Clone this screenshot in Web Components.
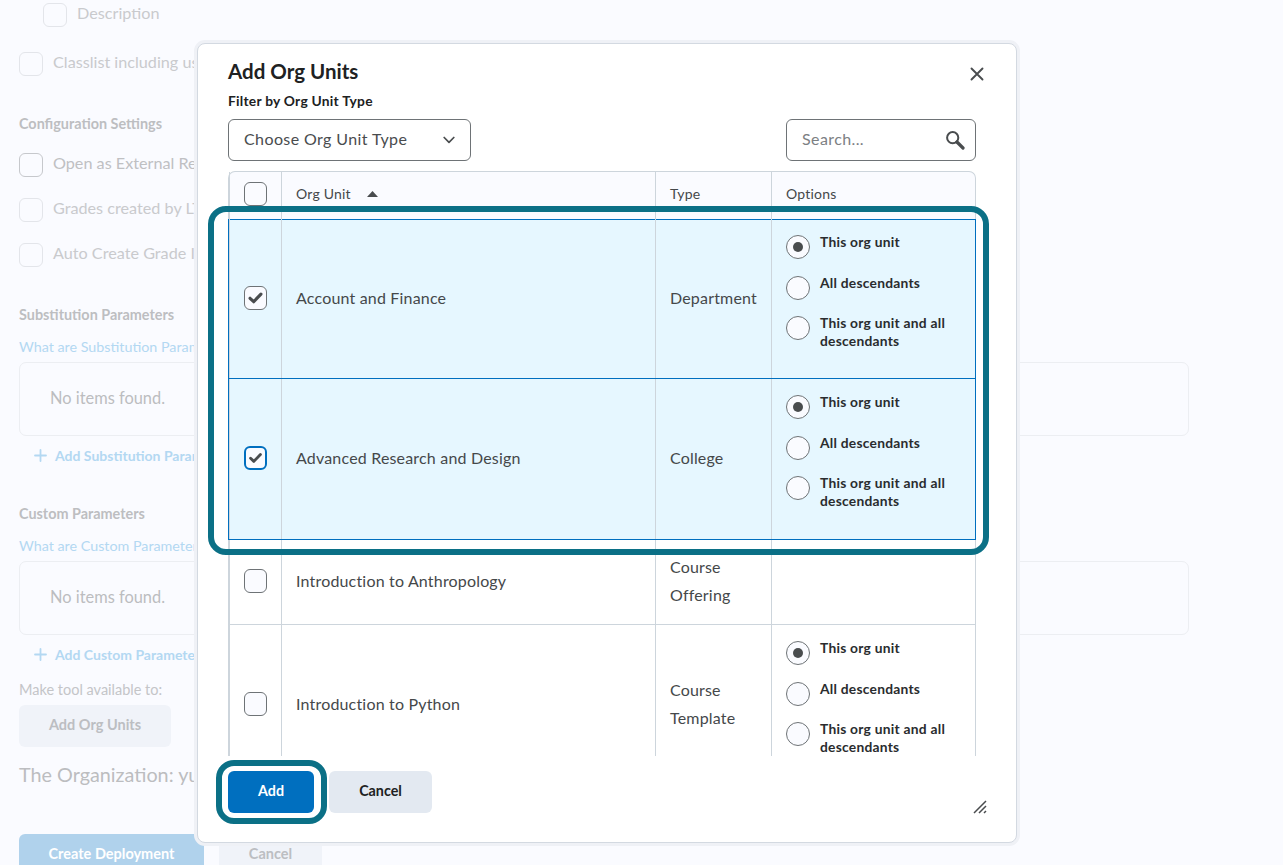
<!DOCTYPE html>
<html lang="en">
<head>
<meta charset="utf-8">
<title>Add Org Units</title>
<style>
   html, body { margin: 0; height: 100%; }
   body { font-family: Lato, "Noto Sans", sans-serif; background: #fafbff; overflow: hidden; }
</style>
</head>
<body>
<bg-page>
   <bg-check style="margin: 3px 0 0 24px">Description</bg-check>
   <bg-check style="margin-top: 25px">Classlist including users</bg-check>
   <bg-heading style="margin-top: 39px">Configuration Settings</bg-heading>
   <bg-check dark style="margin-top: 20px">Open as External Resource</bg-check>
   <bg-check style="margin-top: 21px">Grades created by LTI</bg-check>
   <bg-check style="margin-top: 21px">Auto Create Grade Items</bg-check>
   <bg-heading style="margin-top: 39px">Substitution Parameters</bg-heading>
   <bg-param-list link="What are Substitution Parameters?" add="Add Substitution Parameter"></bg-param-list>
   <bg-heading style="margin-top: 40px">Custom Parameters</bg-heading>
   <bg-param-list link="What are Custom Parameters?" add="Add Custom Parameter"></bg-param-list>
   <div style="margin-top: 16px; font-size: 14.5px; line-height: 20px; color: #c4c5c8">Make tool available to:</div>
   <bg-button style="margin-top: 5px; width: 152px">Add Org Units</bg-button>
   <div style="margin-top: 15px; font-size: 19.8px; line-height: 24px; color: #bcbdc0">The Organization: yu-lti-test</div>
   <div style="display: flex; gap: 15px; margin-top: 48px">
      <bg-button primary style="width: 185px">Create Deployment</bg-button>
      <bg-button style="width: 103px">Cancel</bg-button>
   </div>
</bg-page>

<org-dialog>
   <org-row slot="rows" header>
      <org-check slot="check"></org-check>
      <span slot="name">Org Unit <sort-caret></sort-caret></span>
      <span slot="type">Type</span>
      <span slot="options">Options</span>
   </org-row>
   <org-row slot="rows" selected first style="height: 160px">
      <org-check slot="check" checked></org-check>
      <span slot="name">Account and Finance</span>
      <span slot="type">Department</span>
      <org-options slot="options"></org-options>
   </org-row>
   <org-row slot="rows" selected style="height: 161px">
      <org-check slot="check" checked focused></org-check>
      <span slot="name">Advanced Research and Design</span>
      <span slot="type">College</span>
      <org-options slot="options"></org-options>
   </org-row>
   <org-row slot="rows" style="height: 85px">
      <org-check slot="check"></org-check>
      <span slot="name">Introduction to Anthropology</span>
      <span slot="type">Course Offering</span>
   </org-row>
   <org-row slot="rows" style="height: 160px">
      <org-check slot="check"></org-check>
      <span slot="name">Introduction to Python</span>
      <span slot="type">Course Template</span>
      <org-options slot="options"></org-options>
   </org-row>
</org-dialog>

<note-ring style="left: 208px; top: 206px; width: 781px; height: 349px"></note-ring>
<note-ring style="left: 216px; top: 760px; width: 111px; height: 64px"></note-ring>

<script>
"use strict";
/* [ helper ]
=================================== */
const define = ( tag, html, setup ) => {
   customElements.define( tag, class extends HTMLElement {
      constructor() {
         super();
         const t = document.createElement( "template" );
         t.innerHTML = html;
         this.attachShadow( { mode: "open" } ).append( t.content.cloneNode( true ) );
      }
      connectedCallback() {
         if( setup ) setup( this, this.shadowRoot );
      }
   } );
};

/* [ page behind the dialog ]
=================================== */
define( "bg-page", `
   <style>
      :host { display: block; height: 865px; overflow: hidden; padding-left: 19px; box-sizing: border-box; }
   </style>
   <slot></slot>
` );

define( "bg-check", `
   <style>
      :host { display: flex; align-items: center; gap: 10px; height: 24px; color: #c9cacd; font-size: 16.2px; white-space: nowrap; }
      :host([dark]) { color: #bfc0c3; }
      box { box-sizing: border-box; width: 24px; height: 24px; border: 1px solid #e3e5ea; border-radius: 6px; background: #fafbff; flex: none; }
      :host([dark]) box { border-color: #c6c8cc; }
      span { padding-bottom: 5px; }
   </style>
   <box></box><span><slot></slot></span>
` );

define( "bg-heading", `
   <style>
      :host { display: block; color: #bdbec1; font-size: 14.4px; font-weight: 700; line-height: 18px; white-space: nowrap; }
   </style>
   <slot></slot>
` );

define( "bg-param-list", `
   <style>
      :host { display: block; width: 1170px; }
      a { display: block; margin-top: 14px; color: #b3d8f2; font-size: 14.3px; line-height: 18px; white-space: nowrap; }
      list { display: flex; align-items: center; box-sizing: border-box; height: 74px; margin-top: 6px; padding: 0 0 3px 30px; border: 1px solid #eceef2; border-radius: 7px; color: #bcbdc0; font-size: 16.4px; }
      add { display: flex; align-items: center; gap: 8px; height: 20px; margin: 9px 0 0 15px; color: #b3d8f2; font-size: 14px; font-weight: 700; white-space: nowrap; }
      svg { width: 13px; height: 13px; }
   </style>
   <a id="link"></a>
   <list>No items found.</list>
   <add>
      <svg viewBox="0 0 13 13"><path d="M6.5 1v11M1 6.5h11" stroke="#b3d8f2" stroke-width="1.8" stroke-linecap="round"/></svg>
      <span id="add"></span>
   </add>
`, ( el, root ) => {
   root.getElementById( "link" ).textContent = el.getAttribute( "link" );
   root.getElementById( "add" ).textContent = el.getAttribute( "add" );
} );

define( "bg-button", `
   <style>
      :host { display: flex; align-items: center; justify-content: center; box-sizing: border-box; height: 42px; padding-bottom: 3px; border-radius: 6px; background: #f0f3f9; color: #bcbec2; font-size: 14.5px; font-weight: 700; white-space: nowrap; }
      :host([primary]) { background: #b0d2ec; color: #fff; }
   </style>
   <slot></slot>
` );

/* [ dialog ]
=================================== */
define( "org-dialog", `
   <style>
      :host { position: absolute; left: 197px; top: 43px; width: 820px; height: 800px; box-sizing: border-box; display: flex; flex-direction: column; padding: 0 40px 0 30px; background: #fff; border: 1px solid #d3d9e1; border-radius: 8px; box-shadow: 0 0 0 3px #eff1f6; color: #202122; }
      h1 { margin: 14px 0 0; font-size: 20.5px; font-weight: 700; line-height: 26px; }
      label { display: block; margin-top: 8px; font-size: 13.8px; letter-spacing: .25px; font-weight: 700; line-height: 18px; }
      filter-row { display: flex; justify-content: space-between; margin-top: 9px; }
      field { display: flex; align-items: center; justify-content: space-between; box-sizing: border-box; height: 42px; padding: 0 10px 0 15px; border: 1px solid #6e7376; border-radius: 6px; font-size: 16px; letter-spacing: .4px; }
      field span { padding-bottom: 3px; }
      #select { width: 243px; color: #494c4e; padding-right: 15px; }
      #search { width: 190px; color: #7c8083; }
      close-x { position: absolute; right: 32px; top: 23px; display: flex; }
      rows { display: block; height: 585px; margin-top: 10px; overflow: hidden; }
      footer { display: flex; gap: 15px; margin-top: 15px; }
      button { box-sizing: border-box; height: 42px; border: 0; border-radius: 6px; font: 700 14.3px Lato, sans-serif; padding: 0 0 3px; }
      #add { width: 86px; background: #006fbf; color: #fff; }
      #cancel { width: 103px; background: #e3e9f1; color: #202122; }
      grip { position: absolute; right: 29px; bottom: 28px; display: flex; }
   </style>
   <h1>Add Org Units</h1>
   <label>Filter by Org Unit Type</label>
   <filter-row>
      <field id="select">
         <span>Choose Org Unit Type</span>
         <svg width="12" height="8" viewBox="0 0 12 8"><path d="M1.2 1.5 6 6.3l4.8-4.8" fill="none" stroke="#494c4e" stroke-width="1.7" stroke-linecap="round" stroke-linejoin="round"/></svg>
      </field>
      <field id="search">
         <span>Search...</span>
         <svg width="20" height="20" viewBox="0 0 20 20"><circle cx="7.7" cy="7.7" r="5.6" fill="none" stroke="#494c4e" stroke-width="2"/><path d="m12 12 6 6" stroke="#494c4e" stroke-width="3.2" stroke-linecap="round"/></svg>
      </field>
   </filter-row>
   <close-x>
      <svg width="14" height="14" viewBox="0 0 14 14"><path d="M1.5 1.5l11 11M12.5 1.5l-11 11" stroke="#494c4e" stroke-width="1.9" stroke-linecap="round"/></svg>
   </close-x>
   <rows><slot name="rows"></slot></rows>
   <footer>
      <button id="add">Add</button>
      <button id="cancel">Cancel</button>
   </footer>
   <grip>
      <svg width="14" height="14" viewBox="0 0 14 14"><path d="M1 13 13 1M6 13l7-7M11 13l2-2" stroke="#494c4e" stroke-width="1.5"/></svg>
   </grip>
` );

define( "org-row", `
   <style>
      :host { display: grid; grid-template-columns: 52px 374px 116px 204px; box-sizing: border-box; width: 748px; border: solid #cdd5dc; border-width: 0 1px 1px 1px; color: #45484a; font-size: 16px; letter-spacing: .18px; }
      :host([header]) { height: 48px; background: #fafbff; border-width: 1px 1px 0 1px; border-radius: 7px 7px 0 0; font-size: 14px; letter-spacing: .2px; }
      :host([selected]) { background: #e6f7ff; border-color: #006fbf; }
      :host([first]) { box-shadow: inset 0 1px #006fbf; }
      cell { display: flex; align-items: center; box-sizing: border-box; padding: 0 14px 2px; border-left: 1px solid #cdd5dc; line-height: 28px; min-width: 0; }
      cell:first-child { border-left: 0; padding: 1px 0 0; justify-content: center; }
      :host([header]) cell { padding-bottom: 3px; }
      :host([header]) cell:first-child { padding: 0; }
      #options { padding: 0 14px; align-items: flex-start; }
      :host([header]) #options { align-items: center; padding-bottom: 3px; }
   </style>
   <cell><slot name="check"></slot></cell>
   <cell><slot name="name"></slot></cell>
   <cell><slot name="type"></slot></cell>
   <cell id="options"><slot name="options"></slot></cell>
` );

define( "sort-caret", `
   <style>
      :host { display: inline-block; margin-left: 12px; vertical-align: 2px; }
      svg { display: block; }
   </style>
   <svg width="11" height="6" viewBox="0 0 11 6"><path d="M5.5 0 11 6H0z" fill="#494c4e"/></svg>
` );

define( "org-check", `
   <style>
      :host { display: block; width: 24px; height: 24px; box-sizing: border-box; border: 1px solid #6e7376; border-radius: 6px; background: #fafbff; }
      :host([focused]) { border: 2px solid #006fbf; }
      svg { display: none; width: 100%; height: 100%; }
      :host([checked]) svg { display: block; }
   </style>
   <svg viewBox="0 0 22 22"><path d="M5.3 11.3l3.8 3.6 7.6-8" fill="none" stroke="#494c4e" stroke-width="3.3" stroke-linecap="round" stroke-linejoin="round"/></svg>
` );

define( "org-radio", `
   <style>
      :host { display: flex; gap: 10px; color: #2a2c2e; font-size: 13.8px; letter-spacing: .25px; font-weight: 700; line-height: 18px; }
      dot { flex: none; display: flex; align-items: center; justify-content: center; box-sizing: border-box; width: 24px; height: 24px; margin-top: 4px; border: 1px solid #6e7376; border-radius: 50%; background: #fafbff; }
      :host([checked]) dot::after { content: ""; width: 10px; height: 10px; border-radius: 50%; background: #494c4e; }
      span { display: block; margin-top: 2px; }
   </style>
   <dot></dot><span><slot></slot></span>
` );

define( "org-options", `
   <style>
      :host { display: flex; flex-direction: column; gap: 12.5px; margin-top: 12px; }
   </style>
   <org-radio checked>This org unit</org-radio>
   <org-radio>All descendants</org-radio>
   <org-radio>This org unit and all descendants</org-radio>
` );

/* [ tutorial highlight ]
=================================== */
define( "note-ring", `
   <style>
      :host { position: absolute; box-sizing: border-box; border: 6px solid #0b7086; border-radius: 18px; pointer-events: none; }
   </style>
` );
</script>
</body>
</html>
